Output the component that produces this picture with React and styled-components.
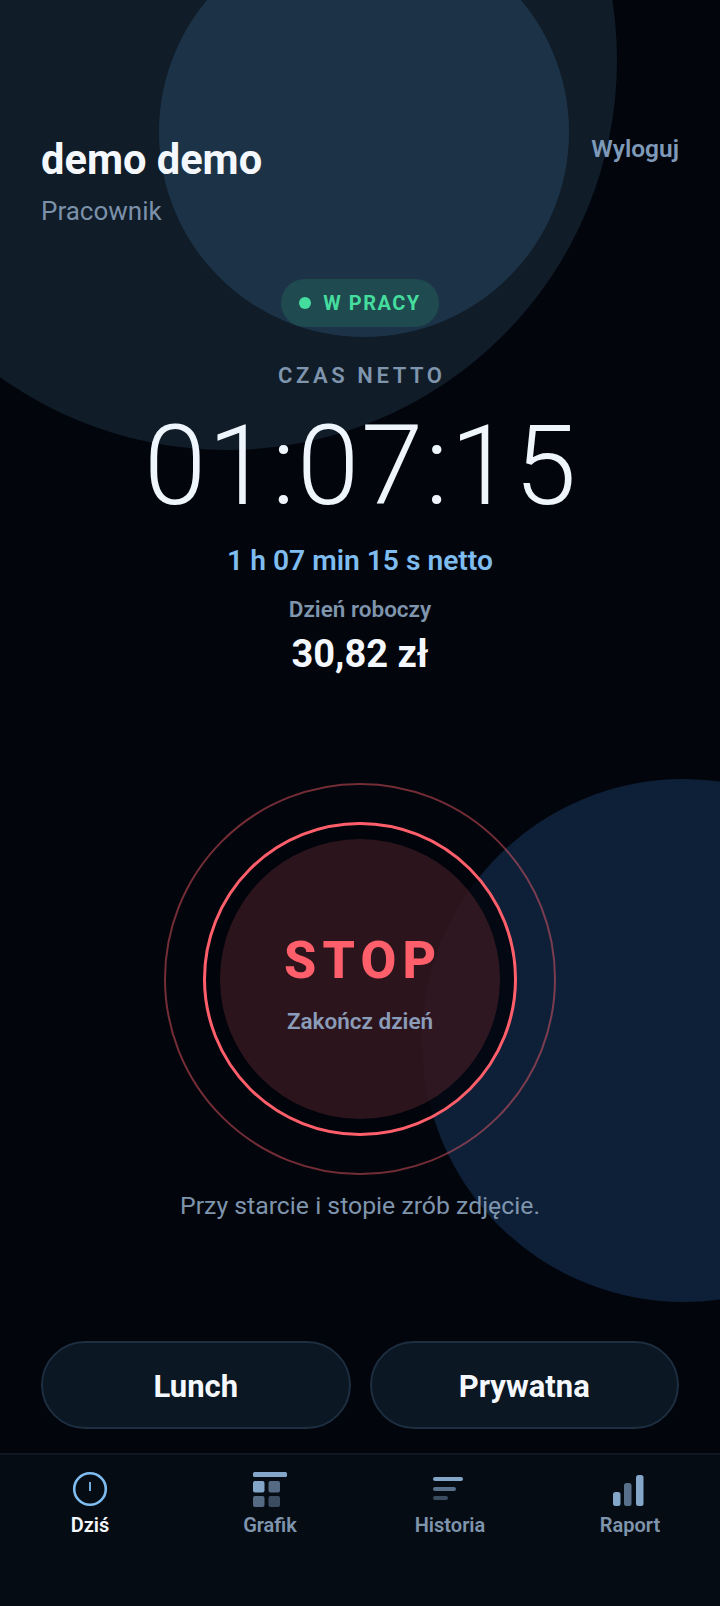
import styled, { createGlobalStyle } from "styled-components";

const GlobalStyle = createGlobalStyle`
  html, body {
    margin: 0;
    padding: 0;
    background: #02050c;
  }
  * {
    box-sizing: border-box;
  }
`;

const ClockIcon = () => (
  <svg width="36" height="36" viewBox="0 0 36 36" fill="none">
    <circle cx="18" cy="18" r="15.8" stroke="#7fbdf0" strokeWidth="2.6" />
    <line x1="18" y1="11" x2="18" y2="20" stroke="#7fbdf0" strokeWidth="1.8" />
  </svg>
);

const GridIcon = () => (
  <svg width="36" height="36" viewBox="0 0 36 36" fill="#84a6c8">
    <rect x="1" y="1" width="34" height="5" rx="1.5" />
    <rect x="1" y="10" width="11.5" height="11.5" rx="2" />
    <rect x="16.5" y="10" width="11.5" height="11.5" rx="2" opacity="0.62" />
    <rect x="1" y="25" width="11.5" height="11" rx="2" opacity="0.62" />
    <rect x="16.5" y="25" width="11.5" height="11" rx="2" opacity="0.42" />
  </svg>
);

const ListIcon = () => (
  <svg width="36" height="36" viewBox="0 0 36 36" fill="#84a6c8">
    <rect x="1" y="6" width="30" height="4" rx="2" />
    <rect x="1" y="16" width="23" height="4" rx="2" opacity="0.65" />
    <rect x="1" y="25" width="15" height="4" rx="2" opacity="0.42" />
  </svg>
);

const BarsIcon = () => (
  <svg width="36" height="36" viewBox="0 0 36 36" fill="#84a6c8">
    <rect x="1" y="21" width="7.5" height="14" rx="2.5" />
    <rect x="12" y="12" width="7.5" height="23" rx="2.5" opacity="0.65" />
    <rect x="24" y="4" width="7.5" height="31" rx="2.5" />
  </svg>
);

const TABS = [
  { label: "Dziś", icon: <ClockIcon />, active: true },
  { label: "Grafik", icon: <GridIcon /> },
  { label: "Historia", icon: <ListIcon /> },
  { label: "Raport", icon: <BarsIcon /> },
];

export default function App() {
  return (
    <>
      <GlobalStyle />
      <Screen>
        <BigCircle />
        <InnerCircle />
        <BlueCircle />

        <Header>
          <div>
            <UserName>demo demo</UserName>
            <UserRole>Pracownik</UserRole>
          </div>
          <Logout>Wyloguj</Logout>
        </Header>

        <Summary>
          <StatusPill>
            <StatusDot />
            W PRACY
          </StatusPill>
          <TimerLabel>CZAS NETTO</TimerLabel>
          <Timer>01:07:15</Timer>
          <TimerText>1 h 07 min 15 s netto</TimerText>
          <DayLabel>Dzień roboczy</DayLabel>
          <DayAmount>30,82 zł</DayAmount>
        </Summary>

        <StopArea>
          <OuterRing>
            <StopRing>
              <StopButton>
                <StopText>STOP</StopText>
                <StopHint>Zakończ dzień</StopHint>
              </StopButton>
            </StopRing>
          </OuterRing>
          <PhotoHint>Przy starcie i stopie zrób zdjęcie.</PhotoHint>
        </StopArea>

        <Actions>
          <ActionBtn>Lunch</ActionBtn>
          <ActionBtn>Prywatna</ActionBtn>
        </Actions>

        <BottomNav>
          {TABS.map((tab) => (
            <NavItem key={tab.label}>
              {tab.icon}
              <NavLabel $active={tab.active}>{tab.label}</NavLabel>
            </NavItem>
          ))}
        </BottomNav>
      </Screen>
    </>
  );
}

const Screen = styled.div`
  position: relative;
  width: 720px;
  height: 1606px;
  overflow: hidden;
  background: #02050c;
  display: flex;
  flex-direction: column;
  font-family: Roboto, "Liberation Sans", sans-serif;
`;

const BigCircle = styled.div`
  position: absolute;
  left: -163px;
  top: -330px;
  width: 780px;
  height: 780px;
  border-radius: 50%;
  background: #101c28;
`;

const InnerCircle = styled.div`
  position: absolute;
  left: 159px;
  top: -73px;
  width: 410px;
  height: 410px;
  border-radius: 50%;
  background: #1c3347;
`;

const BlueCircle = styled.div`
  position: absolute;
  left: 422px;
  top: 779px;
  width: 523px;
  height: 523px;
  border-radius: 50%;
  background: #0e2038;
`;

const Header = styled.div`
  position: relative;
  display: flex;
  justify-content: space-between;
  align-items: flex-start;
  padding: 135px 41px 0 41px;
`;

const UserName = styled.div`
  color: #f4f8fc;
  font-size: 41.6px;
  font-weight: 700;
  line-height: 50px;
`;

const UserRole = styled.div`
  color: #7b91aa;
  font-size: 26px;
  line-height: 34px;
  margin-top: 9px;
`;

const Logout = styled.div`
  color: #7f9ab8;
  font-size: 24.5px;
  font-weight: 600;
  line-height: 30px;
  margin-top: -1px;
`;

const Summary = styled.div`
  position: relative;
  display: flex;
  flex-direction: column;
  align-items: center;
  margin-top: 51px;
`;

const StatusPill = styled.div`
  display: flex;
  align-items: center;
  gap: 12px;
  height: 48px;
  padding: 0 18px;
  border-radius: 24px;
  background: #1e4a50;
  color: #45dd9e;
  font-size: 20px;
  font-weight: 700;
  letter-spacing: 1.5px;
`;

const StatusDot = styled.span`
  width: 12px;
  height: 12px;
  border-radius: 50%;
  background: #45dd9e;
`;

const TimerLabel = styled.div`
  margin-top: 36px;
  padding-left: 3.6px;
  color: #7f95ad;
  font-size: 22px;
  font-weight: 600;
  letter-spacing: 3.6px;
  line-height: 26px;
`;

const Timer = styled.div`
  margin-top: 11px;
  padding-left: 2px;
  color: #eef5fc;
  font-size: 112px;
  font-weight: 300;
  letter-spacing: 1.8px;
  line-height: 132px;
`;

const TimerText = styled.div`
  margin-top: 11px;
  color: #7fbdf0;
  font-size: 28.2px;
  font-weight: 600;
  line-height: 36px;
`;

const DayLabel = styled.div`
  margin-top: 16px;
  color: #7f95ad;
  font-size: 22.5px;
  font-weight: 600;
  line-height: 28px;
`;

const DayAmount = styled.div`
  margin-top: 8px;
  color: #f4f8fc;
  font-size: 38px;
  font-weight: 700;
  line-height: 46px;
`;

const StopArea = styled.div`
  position: relative;
  display: flex;
  flex-direction: column;
  align-items: center;
  margin-top: 106px;
`;

const OuterRing = styled.div`
  width: 392px;
  height: 392px;
  border-radius: 50%;
  border: 2px solid rgba(255, 95, 107, 0.45);
  display: flex;
  align-items: center;
  justify-content: center;
`;

const StopRing = styled.div`
  width: 314px;
  height: 314px;
  border-radius: 50%;
  border: 3.5px solid #ff5f6b;
  background: rgba(2, 5, 12, 0.85);
  display: flex;
  align-items: center;
  justify-content: center;
`;

const StopButton = styled.div`
  width: 280px;
  height: 280px;
  border-radius: 50%;
  background: rgba(255, 100, 110, 0.17);
  display: flex;
  flex-direction: column;
  align-items: center;
  justify-content: center;
  padding-top: 8px;
`;

const StopText = styled.div`
  padding-left: 6.5px;
  color: #ff5f6b;
  font-size: 52px;
  font-weight: 800;
  letter-spacing: 6.2px;
  line-height: 60px;
`;

const StopHint = styled.div`
  margin-top: 16px;
  color: #8a9cb8;
  font-size: 22.5px;
  font-weight: 600;
  line-height: 28px;
`;

const PhotoHint = styled.div`
  margin-top: 14px;
  color: #7f95ad;
  font-size: 24.8px;
  line-height: 34px;
`;

const Actions = styled.div`
  position: relative;
  display: flex;
  gap: 19px;
  padding: 0 41px;
  margin-top: 118px;
`;

const ActionBtn = styled.div`
  flex: 1;
  height: 88px;
  border-radius: 44px;
  border: 2px solid #1c2e40;
  background: #0b1722;
  color: #f4f8fc;
  font-size: 31px;
  font-weight: 700;
  padding-top: 2px;
  display: flex;
  align-items: center;
  justify-content: center;
`;

const BottomNav = styled.div`
  position: relative;
  flex: 1;
  margin-top: 24px;
  border-top: 2px solid #0f1720;
  background: #060c14;
  display: grid;
  grid-template-columns: repeat(4, 1fr);
  padding-top: 16px;
`;

const NavItem = styled.div`
  display: flex;
  flex-direction: column;
  align-items: center;
`;

const NavLabel = styled.div`
  margin-top: 5px;
  color: ${(props) => (props.$active ? "#f4f8fc" : "#7f95ad")};
  font-size: 20px;
  font-weight: 600;
  line-height: 26px;
`;
